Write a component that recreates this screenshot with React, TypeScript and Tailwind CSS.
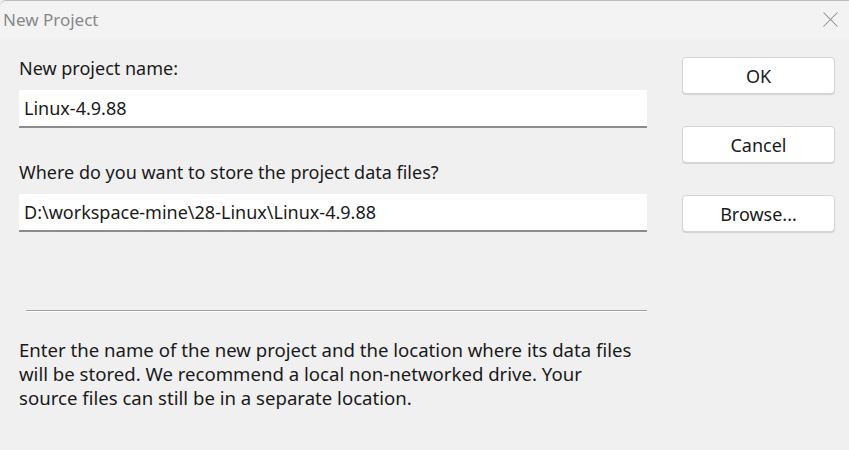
import { X } from 'lucide-react';

function DialogButton({ label }: { label: string }) {
  return (
    <button className="w-[153px] h-[37px] rounded-[4px] bg-white border border-[#d4d4d4] shadow-[0_1px_1px_rgba(0,0,0,0.12)] text-[18px] leading-[24px] text-[#1a1a1a]">
      {label}
    </button>
  );
}

function TextBox({ value }: { value: string }) {
  return (
    <div className="h-[38px] bg-white border-b-2 border-[#8c8c8c] flex items-center px-[5px] text-[18px] text-[#1a1a1a]">
      {value}
    </div>
  );
}

function App() {
  return (
    <div
      className="w-[849px] h-[450px] bg-[#f0f0f0] flex flex-col overflow-hidden"
      style={{ fontFamily: '"Noto Sans", "Open Sans", sans-serif' }}
    >
      {/* title bar */}
      <div className="h-[38px] bg-[#f3f3f3] border-t border-[#b9b9b9] rounded-tl-[6px] flex items-center justify-between pl-[3px] pr-[5px]">
        <span className="text-[17px] text-[#888888]">New Project</span>
        <X size={27} strokeWidth={0.9} className="text-[#8a8a8a]" />
      </div>

      <div className="flex flex-1 pl-[19px] pr-[14px] pt-[18px]">
        {/* left column */}
        <div className="w-[628px] flex flex-col">
          <div className="text-[18px] text-[#1a1a1a] leading-[24px]">New project name:</div>
          <div className="mt-[10px]">
            <TextBox value="Linux-4.9.88" />
          </div>
          <div className="mt-[32px] text-[18px] text-[#1a1a1a] leading-[24px]">
            Where do you want to store the project data files?
          </div>
          <div className="mt-[10px]">
            <TextBox value="D:\workspace-mine\28-Linux\Linux-4.9.88" />
          </div>
          <div className="mt-[78px] ml-[7px] h-[2px] border-t border-[#a0a0a0] border-b border-b-white" />
          <p className="mt-[26px] text-[18.6px] leading-[24px] text-[#1a1a1a] whitespace-nowrap">
            Enter the name of the new project and the location where its data files
            <br />
            will be stored. We recommend a local non-networked drive. Your
            <br />
            source files can still be in a separate location.
          </p>
        </div>

        {/* buttons */}
        <div className="ml-auto flex flex-col gap-[32px] pt-[1px]">
          <DialogButton label="OK" />
          <DialogButton label="Cancel" />
          <DialogButton label="Browse..." />
        </div>
      </div>
    </div>
  );
}

export default App;
